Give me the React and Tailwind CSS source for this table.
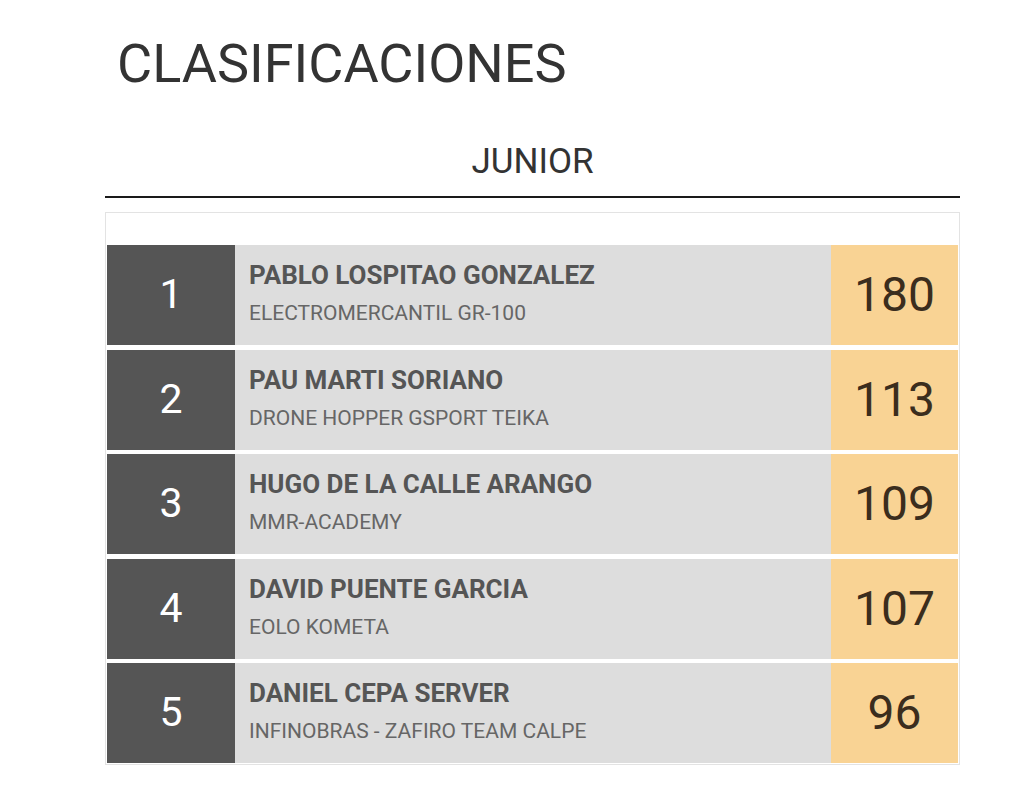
import React from 'react'

const rows = [
  { pos: 1, name: 'PABLO LOSPITAO GONZALEZ', team: 'ELECTROMERCANTIL GR-100', points: 180 },
  { pos: 2, name: 'PAU MARTI SORIANO', team: 'DRONE HOPPER GSPORT TEIKA', points: 113 },
  { pos: 3, name: 'HUGO DE LA CALLE ARANGO', team: 'MMR-ACADEMY', points: 109 },
  { pos: 4, name: 'DAVID PUENTE GARCIA', team: 'EOLO KOMETA', points: 107 },
  { pos: 5, name: 'DANIEL CEPA SERVER', team: 'INFINOBRAS - ZAFIRO TEAM CALPE', points: 96 },
]

export default function App() {
  return (
    <div className="min-h-[790px] bg-white font-['Roboto',sans-serif]">
      <div className="ml-[105px] w-[855px] pt-[37px]">
        {/* Page title */}
        <h1 className="pl-[12px] text-[54px] leading-none text-[#333333]">CLASIFICACIONES</h1>

        <h2 className="mt-[53px] text-center text-[35px] leading-none text-[#333333]">JUNIOR</h2>
        <div className="mt-[17px] h-[2px] bg-[#1a1a1a]" />

        {/* Ranking table */}
        <div className="mt-[14px] border border-[#e3e3e3] px-[1px] pb-[1px]">
          <div className="h-[32px]" />
          <div className="flex flex-col gap-[4.5px]">
            {rows.map((r) => (
              <div key={r.pos} className="flex h-[100px]">
                <div className="flex w-[128px] items-center justify-center bg-[#555555] text-[41px] text-white">
                  {r.pos}
                </div>
                <div className="flex-1 bg-[#dddddd] pl-[14px] pt-[17px]">
                  <p className="text-[26px] font-bold leading-[26px] text-[#555555]">{r.name}</p>
                  <p className="mt-[15px] text-[21px] leading-[21px] text-[#666666]">{r.team}</p>
                </div>
                <div className="flex w-[127px] items-center justify-center bg-[#f9d394] text-[48px] text-[#3b2d1d]">
                  {r.points}
                </div>
              </div>
            ))}
          </div>
        </div>
      </div>
    </div>
  )
}
